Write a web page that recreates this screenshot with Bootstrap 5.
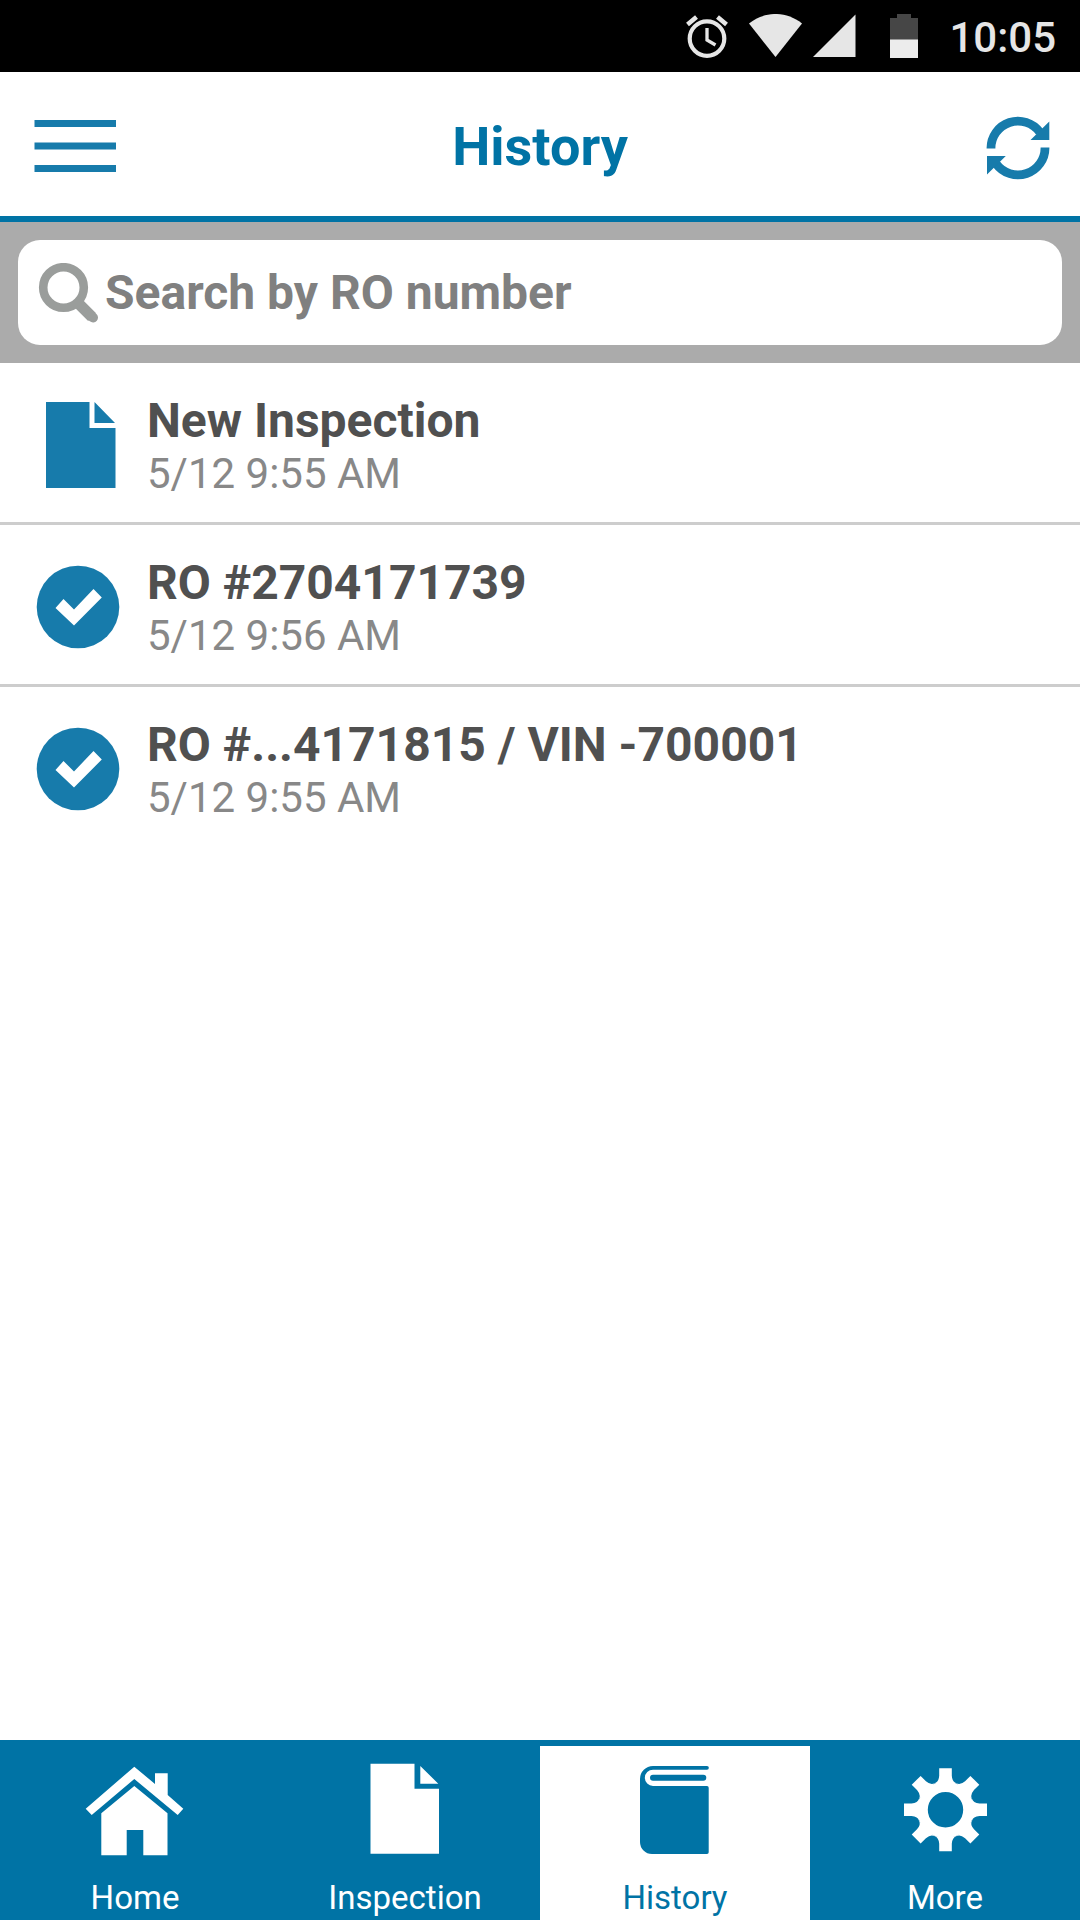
<!DOCTYPE html>
<html lang="en">
<head>
<meta charset="utf-8">
<meta name="viewport" content="width=device-width, initial-scale=1">
<title>History</title>
<link href="https://cdn.jsdelivr.net/npm/bootstrap@5.3.0/dist/css/bootstrap.min.css" rel="stylesheet">
<style>
  :root { --brand: #0073a5; --brand-icon: #177bab; }
  body { font-family: Roboto, "Noto Sans", sans-serif; background: #fff; }
  svg { display: block; flex-shrink: 0; }
  .status-bar { height: 72px; background: #000; color: #e6e6e6; padding-right: 24px; }
  .clock { font-size: 42px; line-height: 48px; font-weight: 500; padding-top: 3px; margin-left: 31px; }
  .app-header { height: 150px; padding: 4px 30px 0; border-bottom: 6px solid var(--brand); color: var(--brand-icon); }
  .app-header h1 { font-size: 54px; line-height: 64px; padding-top: 2px; color: var(--brand); }
  .header-side { flex: 1 0 0; }
  .search-strip { background: #ababab; padding: 18px; }
  .search-box { background: #fff; border-radius: 22px; height: 105px; padding: 0 20px; }
  .search-box .form-control { font-size: 48px; line-height: 56px; padding: 0 0 0 5px; color: #505050; }
  .search-box .form-control::placeholder { color: #808080; opacity: 1; }
  .history-list .list-group-item { border-color: #cdcdcd; border-width: 0 0 3px; padding: 0; }
  .history-list .list-group-item:last-child { border-bottom: 0; }
  .entry { gap: 27px; padding: 27px 36px 23px; color: var(--brand-icon); }
  .entry-text { padding-top: 3px; }
  .entry-title { font-size: 48px; line-height: 56px; color: #505050; }
  .entry-date { font-size: 42px; line-height: 50px; color: #888; }
  .tab-bar { background: var(--brand); border-top: 6px solid var(--brand); }
  .tab-bar .nav-link { color: #fff; border-radius: 0; padding: 14px 0 2px; gap: 22px; font-size: 33px; line-height: 40px; }
  .tab-bar .nav-link.active { color: var(--brand); background: #fff; }
</style>
</head>
<body>
<div class="d-flex flex-column min-vh-100">
  <div class="status-bar d-flex align-items-center justify-content-end">
    <svg width="42" height="44" viewBox="0 0 42 44" fill="none" stroke="#e6e6e6" role="img" aria-label="Alarm">
      <circle cx="21" cy="24.600" r="17.300" stroke-width="4.200"/>
      <path d="M21 14v12l8.500 5" stroke-width="3.300"/>
      <path d="M1.500 10.500 10.500 3M31.500 3l9 7.500" stroke-width="4.500"/>
    </svg>
    <svg class="ms-3" width="58" height="44" viewBox="-5 0 58 44" fill="#e6e6e6" role="img" aria-label="Wi-Fi">
      <path d="M0 9.500C16-3.200 37-3.200 53 9.500L26.500 43z"/>
    </svg>
    <svg width="54" height="44" viewBox="-11 0 54 44" fill="#e6e6e6" role="img" aria-label="Signal"><path d="M0 43 42.500.500V43z"/></svg>
    <svg width="62" height="44" viewBox="-34 0 62 44" role="img" aria-label="Battery">
      <path d="M0 4h7V0h14v4h7v22H0z" fill="#464646"/><path d="M0 25.500h28V44H0z" fill="#ececec"/>
    </svg>
    <span class="clock">10:05</span>
  </div>

  <header class="app-header d-flex align-items-center">
    <div class="header-side d-flex">
      <button type="button" class="btn border-0 p-0" aria-label="Menu">
        <svg width="86" height="54" viewBox="-4 0 86 54" fill="var(--brand-icon)"><path d="M.500 1H82v7H.500zM.500 23.500H82v7H.500zM.500 46H82v7H.500z"/></svg>
      </button>
    </div>
    <h1 class="fw-bold mb-0">History</h1>
    <div class="header-side d-flex justify-content-end">
      <button type="button" class="btn border-0 p-0" aria-label="Refresh">
        <svg width="64" height="68" viewBox="0 0 64 68">
          <g fill="none" stroke="var(--brand-icon)" stroke-width="8.800">
            <path d="M5 36.500A27 27 0 0 1 53.800 20.200"/><path d="M59 35.500A27 27 0 0 1 10.200 51.800"/>
          </g>
          <path d="M63.300 9.500V28H44.500zM1 62.500V44h18.800z" fill="var(--brand-icon)"/>
        </svg>
      </button>
    </div>
  </header>

  <form class="search-strip" role="search">
    <div class="search-box d-flex align-items-center">
      <label for="ro-search" aria-label="Search">
        <svg width="62" height="60" viewBox="0 0 62 60" fill="none" stroke="#9a9d9b">
          <circle cx="25.500" cy="24.500" r="20.300" stroke-width="8.600"/>
          <path d="m41 41 13 13" stroke-width="11"/><path d="m52 52 3 2.500" stroke-width="10" stroke-linecap="round"/>
        </svg>
      </label>
      <input id="ro-search" type="search" class="form-control border-0 shadow-none bg-transparent fw-bold" placeholder="Search by RO number">
    </div>
  </form>

  <main class="flex-grow-1">
    <ul class="history-list list-group list-group-flush">
      <li class="list-group-item">
        <a href="#new" class="entry d-flex align-items-center text-decoration-none">
          <svg width="84" height="86" viewBox="0 0 84 86" fill="currentColor"><path d="M10 0h43.500v26H79.500v85H10zM58.500 0 79 21H58.500z"/></svg>
          <div class="entry-text"><div class="entry-title fw-bold">New Inspection</div><div class="entry-date">5/12 9:55 AM</div></div>
        </a>
      </li>
      <li class="list-group-item">
        <a href="#2704171739" class="entry d-flex align-items-center text-decoration-none">
          <svg width="84" height="84" viewBox="0 0 84 84"><circle cx="42" cy="42" r="41.300" fill="currentColor"/><path d="m19.500 43 8-9L38 44.500 57.500 24l8.300 8.500L38 60.500z" fill="#fff"/></svg>
          <div class="entry-text"><div class="entry-title fw-bold">RO #2704171739</div><div class="entry-date">5/12 9:56 AM</div></div>
        </a>
      </li>
      <li class="list-group-item">
        <a href="#4171815" class="entry d-flex align-items-center text-decoration-none">
          <svg width="84" height="84" viewBox="0 0 84 84"><circle cx="42" cy="42" r="41.300" fill="currentColor"/><path d="m19.500 43 8-9L38 44.500 57.500 24l8.300 8.500L38 60.500z" fill="#fff"/></svg>
          <div class="entry-text"><div class="entry-title fw-bold">RO #...4171815 / VIN -700001</div><div class="entry-date">5/12 9:55 AM</div></div>
        </a>
      </li>
    </ul>
  </main>

  <nav class="tab-bar nav nav-fill flex-nowrap" aria-label="Main">
    <a class="nav-link d-flex flex-column align-items-center w-25" href="#home">
      <svg width="100" height="96" viewBox="0 0 100 96" fill="currentColor"><path d="M49.300 6.700 70 24V13.300h12.700V35l15.600 13.700-5.600 6.300L49.300 19 6.700 55l-6-6.300zM49.300 26l33.200 27.300v42H58.300V70H41.700v25.300H16.300v-42z"/></svg>
      <span>Home</span>
    </a>
    <a class="nav-link d-flex flex-column align-items-center w-25" href="#inspection">
      <svg width="100" height="96" viewBox="0 0 100 96" fill="currentColor"><path d="M15.500 3.700h44v25H84v65H15.500zM65.300 6 83.300 23.700h-18z"/></svg>
      <span>Inspection</span>
    </a>
    <a class="nav-link active d-flex flex-column align-items-center w-25" href="#history" aria-current="page">
      <svg width="100" height="96" viewBox="0 0 100 96" fill="currentColor"><path d="M28 6h54a1.850 1.850 0 0 1 0 3.700H28a8.150 8.150 0 0 0 0 16.300h54q1.700 0 1.700 1.700V92.300q0 1.700-1.700 1.700H27a12 12 0 0 1-12-12V19A13 13 0 0 1 28 6z"/><rect x="25" y="14.700" width="56.300" height="6" rx="3"/></svg>
      <span>History</span>
    </a>
    <a class="nav-link d-flex flex-column align-items-center w-25" href="#more">
      <svg width="100" height="96" viewBox="-50.500 -49.700 100 96" fill="currentColor">
        <defs><path id="tooth" d="M-6.300-41.500H6.300V-34Q6.800-27.500 11-26.500H-11Q-6.800-27.500-6.300-34z"/></defs>
        <circle r="23" fill="none" stroke="currentColor" stroke-width="10.600"/>
        <use href="#tooth"/><use href="#tooth" transform="rotate(45)"/><use href="#tooth" transform="rotate(90)"/><use href="#tooth" transform="rotate(135)"/>
        <use href="#tooth" transform="rotate(180)"/><use href="#tooth" transform="rotate(225)"/><use href="#tooth" transform="rotate(270)"/><use href="#tooth" transform="rotate(315)"/>
      </svg>
      <span>More</span>
    </a>
  </nav>
</div>
<script src="https://cdn.jsdelivr.net/npm/bootstrap@5.3.0/dist/js/bootstrap.bundle.min.js"></script>
</body>
</html>
